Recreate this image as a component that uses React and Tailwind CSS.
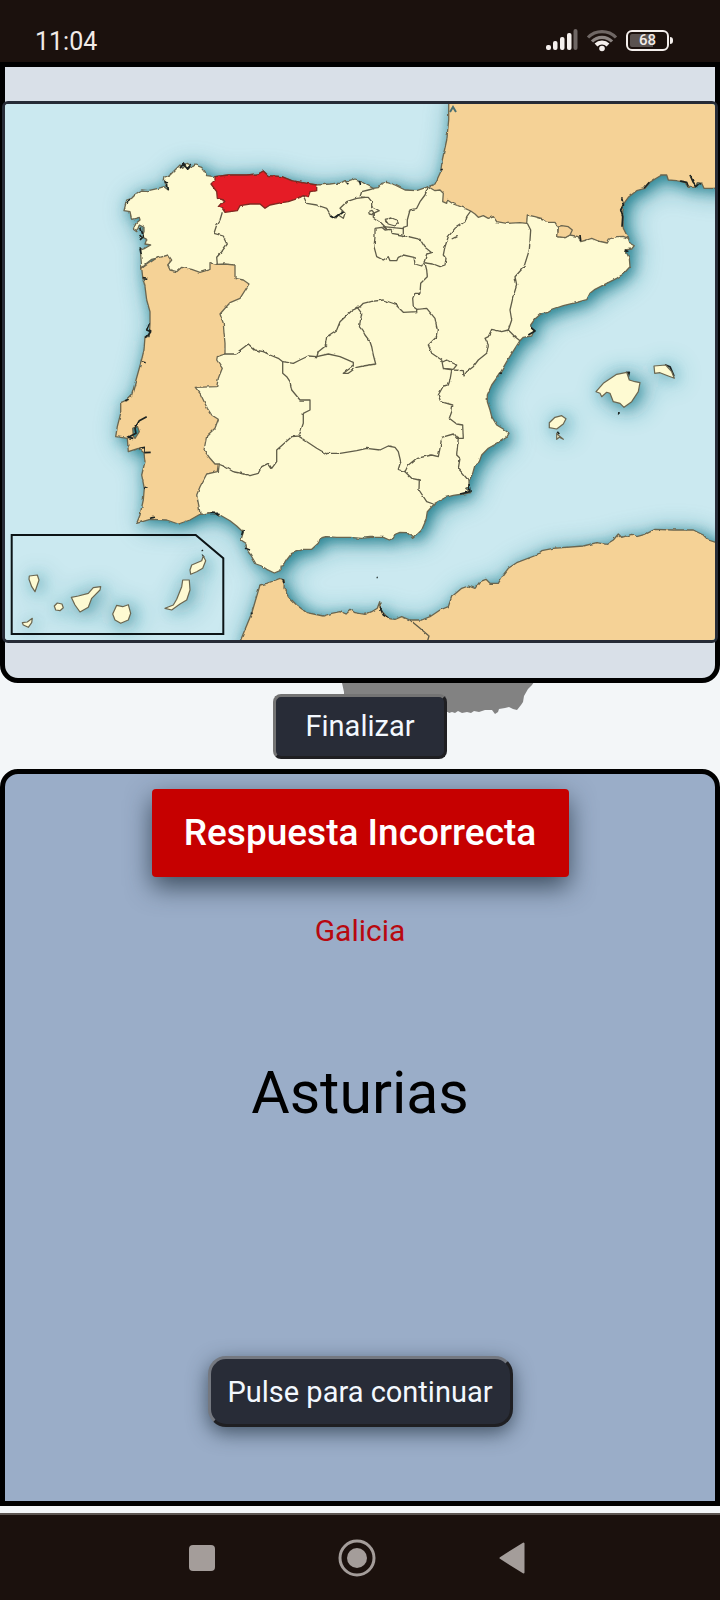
import React from "react";

// Origins of the survey sheets the outlines are stored in (three sheet units per map unit).
const SHEETS = {
  B: [100, 140],
  C: [320, 140],
  D: [520, 95],
  E: [100, 330],
  F: [320, 330],
  G: [520, 330],
  H: [0, 520],
  I: [230, 500],
};

// Turns "B 12,30 15,40 C 3,8" into an SVG path.
function path(text, closed) {
  let origin = SHEETS.B;
  const points = [];
  text.trim().split(/\s+/).forEach((token) => {
    if (SHEETS[token]) {
      origin = SHEETS[token];
      return;
    }
    const [x, y] = token.split(",").map(Number);
    points.push(`${(origin[0] + x / 3).toFixed(1)} ${(origin[1] + y / 3).toFixed(1)}`);
  });
  return `M${points.join("L")}${closed ? "Z" : ""}`;
}

const SPAIN = `C 325,140 345,152 360,150 370,160 368,185 380,190 382,180 400,192 430,203 452,213 465,222 475,232 490,227 505,235 520,230 530,245 560,250 600,248 620,250 622,225
D 45,365 70,372 82,382 105,382 113,395 115,425 135,428 150,420 175,425 182,440 200,435 215,430 235,438 262,444 268,432 290,425 310,424 325,430 330,445 343,452 335,462 315,465 322,478 328,490 330,515 310,537 290,550 260,565 225,583 210,595 200,614 170,622 130,632 100,642 85,652 62,657 45,672 32,690
C 632,560 642,572 635,588 610,592 600,602
F 585,55 560,95 540,130 515,165 502,195 502,215 510,240 515,260 530,285 550,297 567,310 560,322 540,335 505,355 485,375 478,395 465,405 458,430 447,453 447,470 437,475 452,488 430,492 400,496 375,503 345,520 322,545 318,570 305,600 290,615 278,625 262,608 240,607 227,612 220,625 208,630 190,622 150,622 125,625 90,622 50,622 20,620 0,625
I 265,130 245,148 220,148 185,160 170,180 160,197 150,200 150,212 133,219 110,208 95,198 78,192 62,165 50,150 48,130 33,120 40,97 20,78 0,62
E 360,555 330,548 300,553 297,530 290,495 300,470 320,432 352,425 355,402 345,402 330,385 312,360 320,318 345,295 355,268 335,255 322,235 310,210 300,190 286,172 350,170 355,145 367,115 350,90 352,80 375,72
B 375,610 372,580 370,550 360,522 375,505 390,488 420,475 447,432 430,420 405,415 405,375 375,372 350,373 330,368 330,388 300,397 275,388 245,382 230,395 210,390 203,375 215,360 205,345 180,352 155,358 140,370 125,385 122,345 122,330 135,325 152,315 135,312 140,298 125,290 132,275 132,262 118,255 110,275 100,268 108,250 120,240 118,232 95,238 90,215 72,212 80,180 95,175 110,160 125,150 145,152 175,145 192,140 205,150 200,135 190,122 192,112 210,105 225,90 240,75 248,85 262,70 278,80 285,75 305,82 315,95 320,107 345,110 385,105 440,105 475,102 490,93 505,107 545,110 575,122 620,130 650,135 690,132
C 45,130 60,130 75,122 90,122 105,117 120,122 140,135 160,145 175,143 185,130 200,127 225,135 255,150 290,152`;

const ASTURIAS = `B 345,110 385,105 440,105 475,102 490,93 505,107 545,110 575,122 620,130 650,135 650,152 630,155 625,170 610,167 600,172 585,178 565,185 545,188 510,195 495,205 480,192 450,192 420,197 412,212 375,217 367,205 355,200 372,180 352,175 350,155 333,132 345,120`;

const PORTUGAL = `B 125,385 128,412 135,440 140,480 150,515 150,550 148,590
E 135,20 132,60 122,100 108,150 95,195 80,210 62,218 62,250 52,290 47,320 82,325 85,365 115,355 132,368 135,395 125,435 133,475 130,510 120,555 110,580 150,568 200,570 235,582 270,570 300,553 330,548 400,500 400,200 400,60 B 500,432 400,340 205,330`;

const FRANCE = `C 325,140 345,132 362,95 367,60 380,0 386,-60 386,-130 1230,-130
D 630,275 580,280 552,280 545,265 535,263 528,277 505,277 495,262 470,257 445,255 440,240 425,240 405,252 390,262 375,280 350,287 325,307 312,325 308,350 310,400 325,430 250,500 20,450
C 450,260 330,180`;

const AFRICA = `I 20,450 32,420 65,340 90,255 110,250 130,243 150,235 163,240 162,265 175,290 200,315 230,338 280,348 305,340 330,335 345,342 360,328 375,338 405,343 425,335 442,325 449,305 452,330 475,355 495,358 515,350 540,360 575,360 600,350 630,330 655,320 665,290 695,265 715,258 735,265 750,245 768,238 780,250 805,250 820,225 835,205 860,188 920,165 935,152 970,145 1060,138 1100,128 1130,133 1150,120 1165,102 1175,112 1205,103 1220,110 1245,103 1275,88 1330,90 1390,90 1420,105 1435,120 1457,127 1490,127 1490,450`;

const ISLANDS = [
  "G 228,185 250,160 290,133 320,127 328,150 345,155 360,158 355,185 335,215 312,232 300,220 280,215 270,190 260,187 245,200 240,190",
  "G 402,108 437,105 455,125 463,145 445,138 420,128 404,130",
  "G 88,278 105,262 125,257 138,266 130,282 110,297 88,293",
  "G 110,310 118,318 130,328 118,322 110,328",
  "H 88,168 112,165 117,180 105,215 95,200 87,178",
  "H 163,258 172,249 186,252 190,263 180,272 167,270",
  "H 67,308 82,306 97,295 95,308 85,322 70,315",
  "H 214,232 235,228 265,220 280,203 302,200 300,210 275,235 265,262 240,276 225,255",
  "H 350,256 368,260 385,254 392,280 385,300 362,310 345,300 338,282",
  "H 548,180 568,180 570,210 560,240 540,252 515,270 495,265 520,255 530,238 545,200",
  "H 570,150 575,135 605,122 610,108 617,122 608,145 590,155 572,163",
];

const BORDERS = [
  "B 367,217 360,240 350,255 342,280 370,288 382,312 365,335 350,352 352,373",
  "B 610,167 620,190 650,195 680,205 690,222 C 30,225 45,237 55,225 70,235 75,220 60,205 80,185 110,175 135,172 145,172 155,185 155,200 165,205 178,212 160,220 160,232 180,245 195,260 200,268",
  "C 148,214 156,211 161,217 156,224 148,222 146,216",
  "C 135,172 120,170 125,155 145,150 160,146",
  "C 325,140 315,165 300,185 290,205 270,210 262,240 262,258 250,262 250,282",
  "C 195,238 215,234 230,240 235,250 225,258 205,252 195,238",
  "C 200,268 190,260 250,266",
  "C 165,265 185,262 195,270 210,268 215,280 245,285 300,298 315,322 335,338 320,342 313,365 305,378 285,372 282,352 250,345 235,352 230,362 210,362 205,350 190,360 170,350 162,320 165,290 165,265",
  "C 452,213 440,230 435,245 405,265 385,290 375,320 370,345 378,355 375,375 360,380 340,372 313,368",
  "C 395,297 405,292 412,290 405,294",
  "C 315,370 320,390 322,410 302,430 300,460 285,460 278,475 280,500 290,508 290,515 250,517 225,492 190,480 150,485 130,490 120,500 95,512 60,545 50,570 20,590 15,620 E 680,45 655,65 650,82",
  "E 375,72 405,72 445,42 465,60 490,65 510,75 535,85 548,95 580,100 600,90 625,78 650,80 685,72 F 60,80 100,97 100,108 70,130 85,130 110,112 130,108 167,102 160,75 155,50 150,35 135,15 130,5 C 118,560 125,520 110,500",
  "C 290,508 320,505 345,535 352,570 348,595 F 350,20 325,45 335,70 365,90 370,115 400,118 410,105 380,90 365,97",
  "F 370,115 400,120 430,122 432,138 440,125 460,110 475,90 500,70 505,45 495,25 C 505,590 515,568 545,575 565,570 585,590 600,602",
  "C 622,250 632,270 628,330 612,380 585,410 590,435 578,475 570,510 575,540 565,570",
  "F 395,120 390,150 385,165 370,168 355,195 362,215 398,225 395,245 388,265 410,282 428,285 430,325 410,325 400,312 365,322 360,355 355,380 335,375 290,385 265,405 255,425 235,418 242,395 235,365 225,352 205,348 180,360 140,355 110,362 60,370 20,370 E 680,372 650,355 595,318",
  "F 415,325 410,375 420,385 415,415 447,453",
  "F 255,425 275,445 298,450 297,480 320,515 340,522",
  "E 548,95 548,130 560,140 570,155 575,180 600,210 630,210 630,240 610,250 610,280 600,310 595,318 575,320 530,360 530,395 515,415 505,400 485,410 475,430 450,437 425,430 400,425 375,410 355,402",
  "I 540,360 570,385 597,408 592,425",
];

const MARKS = [
  "B 122,262 130,290 120,300",
  "B 116,285 124,295",
  "B 120,325 124,345",
  "B 190,125 202,128 205,150",
  "B 240,85 250,72 262,86 275,72",
  "B 78,190 90,180",
  "B 148,550 140,570 152,575 138,595",
  "B 128,413 142,415",
  "E 125,95 137,98",
  "E 75,212 86,208",
  "E 100,325 85,322 108,310 105,295 118,272 140,260",
  "E 118,355 135,352 135,368 152,367",
  "E 132,475 140,473",
  "E 150,565 165,562",
  "E 330,550 360,550 350,556",
  "E 430,600 425,615",
  "E 435,655 450,660",
  "C 78,125 85,133",
  "C 118,120 122,136",
  "C 362,90 368,88",
  "C 632,562 645,573 625,585",
  "C 30,228 42,234 68,215",
  "D 305,310 310,330 302,345 308,365 306,395",
  "D 372,280 388,262",
  "D 480,258 500,262 505,275",
  "D 510,240 520,262 530,275 542,265",
  "D 180,420 182,438",
  "D 315,465 325,470",
  "F 447,462 450,485 420,492",
  "F 536,132 542,128",
  "F 170,742 173,743",
  "G 315,128 328,127 325,140",
  "G 435,104 450,110 462,138",
  "G 297,245 296,254",
  "G 112,305 118,312",
  "H 606,90 608,93",
  "H 605,104 612,112",
  "I 449,320 460,345 475,354",
  "I 62,340 68,340",
  "I 158,238 162,250",
];

function SpainMap() {
  return (
    <svg
      viewBox="5 104 710 536"
      role="img"
      aria-label="Mapa de España"
      className="block w-full bg-[#cbe9f0]"
    >
      <defs>
        <filter id="wide" x="-20%" y="-20%" width="140%" height="140%">
          <feGaussianBlur stdDeviation="14" />
        </filter>
        <filter id="near" x="-20%" y="-20%" width="140%" height="140%">
          <feGaussianBlur stdDeviation="7" />
        </filter>
        <filter id="rough" filterUnits="userSpaceOnUse" x="0" y="90" width="730" height="560">
          <feTurbulence type="fractalNoise" baseFrequency="0.18" numOctaves="1" seed="4" />
          <feDisplacementMap in="SourceGraphic" scale="3" xChannelSelector="R" yChannelSelector="G" />
        </filter>
        <g id="land">
          <path d={path(FRANCE, true)} />
          <path d={path(PORTUGAL, true)} />
          <path d={path(AFRICA, true)} />
          <path d={path(SPAIN, true)} />
        </g>
        <g id="islands">
          {ISLANDS.map((d) => (
            <path key={d} d={path(d, true)} />
          ))}
        </g>
      </defs>
      <g fill="#237f8e">
        <use href="#land" x="4" y="4" filter="url(#wide)" opacity="0.65" />
        <use href="#land" x="4" y="3" filter="url(#near)" opacity="0.9" />
        <use href="#islands" x="4" y="3" filter="url(#wide)" opacity="0.9" />
        <use href="#islands" x="3" y="2" filter="url(#near)" opacity="0.6" />
      </g>
      <g filter="url(#rough)" stroke="#6b6650" strokeWidth="1.3" strokeLinejoin="round">
        <g fill="#f5d296">
          <path d={path(FRANCE, true)} />
          <path d={path(PORTUGAL, true)} />
          <path d={path(AFRICA, true)} />
        </g>
        <path d={path(SPAIN, true)} fill="#fefad2" />
        <path d={path("D 115,395 125,392 145,395 157,405 150,420 135,428 113,425", true)} fill="#f5d296" />
        <path d={path("E 100,318 98,295 112,288 118,305 105,325", true)} fill="#3d8f99" />
        <g fill="none" stroke="#5f5c49">
          {BORDERS.map((d) => (
            <path key={d} d={path(d, false)} />
          ))}
        </g>
        <path d={path(ASTURIAS, true)} fill="#e51d25" stroke="#7d2a22" />
        <g fill="none" stroke="#1d2420" strokeWidth="1.7">
          {MARKS.map((d) => (
            <path key={d} d={path(d, false)} />
          ))}
        </g>
      </g>
      <use href="#islands" fill="#fefad2" stroke="#6b6650" strokeWidth="1.2" strokeLinejoin="round" />
      <path d="M450 112l3-5 3 5" fill="none" stroke="#4c6f70" strokeWidth="2" />
      <path d={path("H 35,45 587,45 670,115 670,342 35,342", true)} fill="none" stroke="#0c1416" strokeWidth="2" />
    </svg>
  );
}

function StatusBar() {
  return (
    <header className="flex h-[62px] shrink-0 items-end justify-between bg-[#1b110d] pr-[47px] pb-[6px] pl-[35px] text-[#f1ebe8]">
      <time className="text-[25px] leading-7">11:04</time>
      <div className="flex items-center gap-2 pb-1">
        <svg viewBox="0 0 32 22" className="h-[22px] w-8" aria-hidden="true">
          <g fill="#f4efec">
            <rect x="0" y="16" width="5" height="5" rx="2" />
            <rect x="7" y="12" width="4.500" height="9" rx="2" />
            <rect x="14" y="8" width="4.500" height="13" rx="2" />
            <rect x="21" y="4" width="4.500" height="17" rx="2" />
          </g>
          <rect x="27.500" y="0" width="4" height="21" rx="2" fill="#6f6764" />
        </svg>
        <svg viewBox="0 0 32 24" className="h-6 w-8" fill="none" strokeWidth="3.200" aria-hidden="true">
          <path d="M2 9.500a19.500 19.500 0 0 1 28 0" stroke="#6f6764" />
          <path d="M6 13.500a14 14 0 0 1 20 0" stroke="#8d8683" />
          <path d="M10 17a8.500 8.500 0 0 1 12 0" stroke="#f4efec" strokeWidth="4" />
          <circle cx="16" cy="20.500" r="2.800" fill="#f4efec" />
        </svg>
        <div className="flex items-center gap-px">
          <div className="flex h-[21px] w-[43px] items-center justify-center rounded-[6px] border-2 border-[#f4efec] bg-linear-to-r from-[#5a524f] from-65% to-transparent to-65% bg-clip-content p-[2px] text-[15px] leading-none font-medium">
            68
          </div>
          <div className="h-[7px] w-[3px] rounded-r-sm bg-[#f4efec]" />
        </div>
      </div>
    </header>
  );
}

function NavBar() {
  return (
    <nav className="flex h-[87px] shrink-0 items-center justify-center border-t-2 border-[#5d5652] bg-[#1b110d] pr-[6px]">
      <button type="button" aria-label="Recientes" className="flex h-full w-[155px] items-center justify-center">
        <svg viewBox="0 0 26 26" className="block size-[26px]" fill="#a49d9a">
          <rect width="26" height="26" rx="4" />
        </svg>
      </button>
      <button type="button" aria-label="Inicio" className="flex h-full w-[155px] items-center justify-center">
        <svg viewBox="0 0 38 38" className="block size-[38px]" fill="#a49d9a">
          <circle cx="19" cy="19" r="17" fill="none" stroke="#a49d9a" strokeWidth="3" />
          <circle cx="19" cy="19" r="10" />
        </svg>
      </button>
      <button type="button" aria-label="Atrás" className="flex h-full w-[155px] items-center justify-center">
        <svg viewBox="0 0 26 32" className="block h-8 w-[26px]" fill="#a49d9a" stroke="#a49d9a" strokeWidth="2" strokeLinejoin="round">
          <path d="M24.500 1.500v29L1.500 16z" />
        </svg>
      </button>
    </nav>
  );
}

export default function App() {
  return (
    <div className="flex min-h-screen flex-col bg-[#f3f6f8] font-[Roboto,sans-serif]">
      <StatusBar />
      <section className="rounded-b-[18px] border-5 border-black bg-[#d9e0e8] pt-[34px] pb-[35px]">
        <div className="-mx-[3px] overflow-hidden rounded-[6px] border-3 border-[#262b36]">
          <SpainMap />
        </div>
      </section>
      <div className="relative flex h-[86px] shrink-0 items-center justify-center">
        <svg viewBox="0 0 720 86" className="absolute inset-0 size-full" fill="#828282" aria-hidden="true">
          <path d="M342 0l2 9v20h104l1 1 3-1 3 1 3-2 4 2 5-1 4 1 3-2 5 1 6-2 7 0 3 4 3-2 1-3 6-1 4-1 4 2 4 1 4-5 2-3 1-6 4-7 4-4 2-3z" />
        </svg>
        <button
          type="button"
          className="relative h-[65px] w-[174px] rounded-[8px] border-3 border-t-[#747474] border-r-[#1f1f22] border-b-[#1f1f22] border-l-[#747474] bg-[#282c37] text-[29px] leading-8 text-[#f3f8fe]"
        >
          Finalizar
        </button>
      </div>
      <main className="mb-[7px] flex flex-1 flex-col items-center rounded-t-[18px] border-5 border-black bg-[#9aadc8] pt-[15px] pb-[74px]">
        <div className="flex h-[88px] w-[417px] items-center justify-center rounded-[4px] bg-[#c60000] text-[37px] leading-10 font-medium text-white shadow-[0_10px_26px_rgba(30,45,60,0.75)]">
          Respuesta Incorrecta
        </div>
        <p className="mt-9 text-[30px] leading-9 text-[#b8080f]">Galicia</p>
        <h1 className="mt-[110px] text-[59px] leading-[68px]">Asturias</h1>
        <button
          type="button"
          className="mt-auto h-[71px] w-[305px] rounded-[18px] border-3 border-t-[#747880] border-r-[#1f1f22] border-b-[#1f1f22] border-l-[#747880] bg-[#282c37] text-[29px] leading-8 text-[#f3f8fe] shadow-[0_6px_20px_rgba(30,45,60,0.7)]"
        >
          Pulse para continuar
        </button>
      </main>
      <NavBar />
    </div>
  );
}
